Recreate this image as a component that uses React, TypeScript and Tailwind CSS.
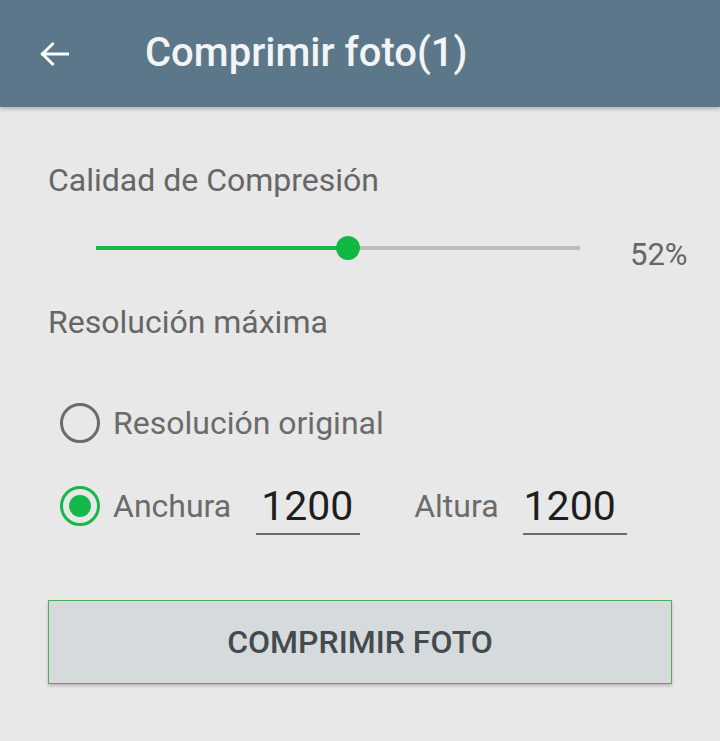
import { useState } from 'react';

export default function App() {
  const [quality] = useState(52);
  const [mode, setMode] = useState<'original' | 'custom'>('custom');
  const [width, setWidth] = useState('1200');
  const [height, setHeight] = useState('1200');

  return (
    <div className="min-h-[741px] w-[720px] bg-[#e8e8e8] font-['Roboto',sans-serif]">
      <header className="flex h-[107px] items-center bg-[#5b7789] shadow-[0_2px_4px_rgba(0,0,0,0.25)]">
        <button type="button" className="ml-[35px] flex h-[40px] w-[40px] items-center justify-center text-white">
          <svg width="40" height="40" viewBox="0 0 24 24" fill="none" stroke="currentColor" strokeWidth="1.8" strokeLinecap="square">
            <path d="M19.5 12H4.5" />
            <path d="M10.5 6L4.5 12l6 6" />
          </svg>
        </button>
        <h1 className="ml-[70px] pb-[2px] text-[40px] font-medium leading-[48px] text-[#f2f4f5]">Comprimir foto(1)</h1>
      </header>

      <div className="px-[48px]">
        <p className="mt-[53px] text-[32px] leading-[40px] text-[#666]">Calidad de Compresión</p>

        <div className="mt-[28px] flex h-[40px] items-center">
          <div className="relative ml-[48px] h-[4px] w-[484px] shrink-0 bg-[#bdbdbd]">
            <div className="h-full bg-[#16b84a]" style={{ width: `${quality}%` }} />
            <div
              className="absolute top-1/2 h-[24px] w-[24px] -translate-x-1/2 -translate-y-1/2 rounded-full bg-[#0fb843]"
              style={{ left: `${quality}%` }}
            />
          </div>
          <span className="ml-[50px] mt-[14px] shrink-0 whitespace-nowrap text-[31px] leading-[40px] text-[#666]">
            {quality}%
          </span>
        </div>

        <p className="mt-[34px] text-[32px] leading-[40px] text-[#666]">Resolución máxima</p>

        <div className="ml-[12px] mt-[61px] flex h-[40px] items-center" onClick={() => setMode('original')}>
          <span
            className={`flex h-[40px] w-[40px] shrink-0 items-center justify-center rounded-full border-[3.5px] ${
              mode === 'original' ? 'border-[#16b84a]' : 'border-[#6b6b6b]'
            }`}
          >
            {mode === 'original' && <span className="h-[22px] w-[22px] rounded-full bg-[#16b84a]" />}
          </span>
          <span className="ml-[13px] text-[32px] leading-[40px] text-[#6b6b6b]">Resolución original</span>
        </div>

        <div className="ml-[12px] mt-[34px] flex items-center">
          <span
            onClick={() => setMode('custom')}
            className={`flex h-[40px] w-[40px] shrink-0 items-center justify-center rounded-full border-[3.5px] ${
              mode === 'custom' ? 'border-[#16b84a]' : 'border-[#6b6b6b]'
            }`}
          >
            {mode === 'custom' && <span className="h-[22px] w-[22px] rounded-full bg-[#16b84a]" />}
          </span>
          <span className="ml-[13px] text-[32px] leading-[40px] text-[#6b6b6b]">Anchura</span>
          <input
            value={width}
            onChange={(e) => setWidth(e.target.value)}
            className="ml-[25px] mt-[6px] w-[104px] shrink-0 border-b-[2px] border-[#6b6b6b] bg-transparent pb-[4px] pl-[5px] text-[41px] leading-[46px] text-[#1e1e1e] outline-none"
          />
          <span className="ml-[54px] text-[32px] leading-[40px] text-[#6b6b6b]">Altura</span>
          <input
            value={height}
            onChange={(e) => setHeight(e.target.value)}
            className="ml-[24px] mt-[6px] w-[104px] shrink-0 border-b-[2px] border-[#6b6b6b] bg-transparent pb-[4px] pl-[1px] text-[41px] leading-[46px] text-[#1e1e1e] outline-none"
          />
        </div>

        <button
          type="button"
          className="mt-[65px] flex h-[84px] w-[624px] items-center justify-center border border-[#4caf50] bg-[#d5dadd] text-[32px] font-medium text-[#444a4e] shadow-[0_2px_3px_rgba(0,0,0,0.2)]"
        >
          COMPRIMIR FOTO
        </button>
      </div>
    </div>
  );
}
